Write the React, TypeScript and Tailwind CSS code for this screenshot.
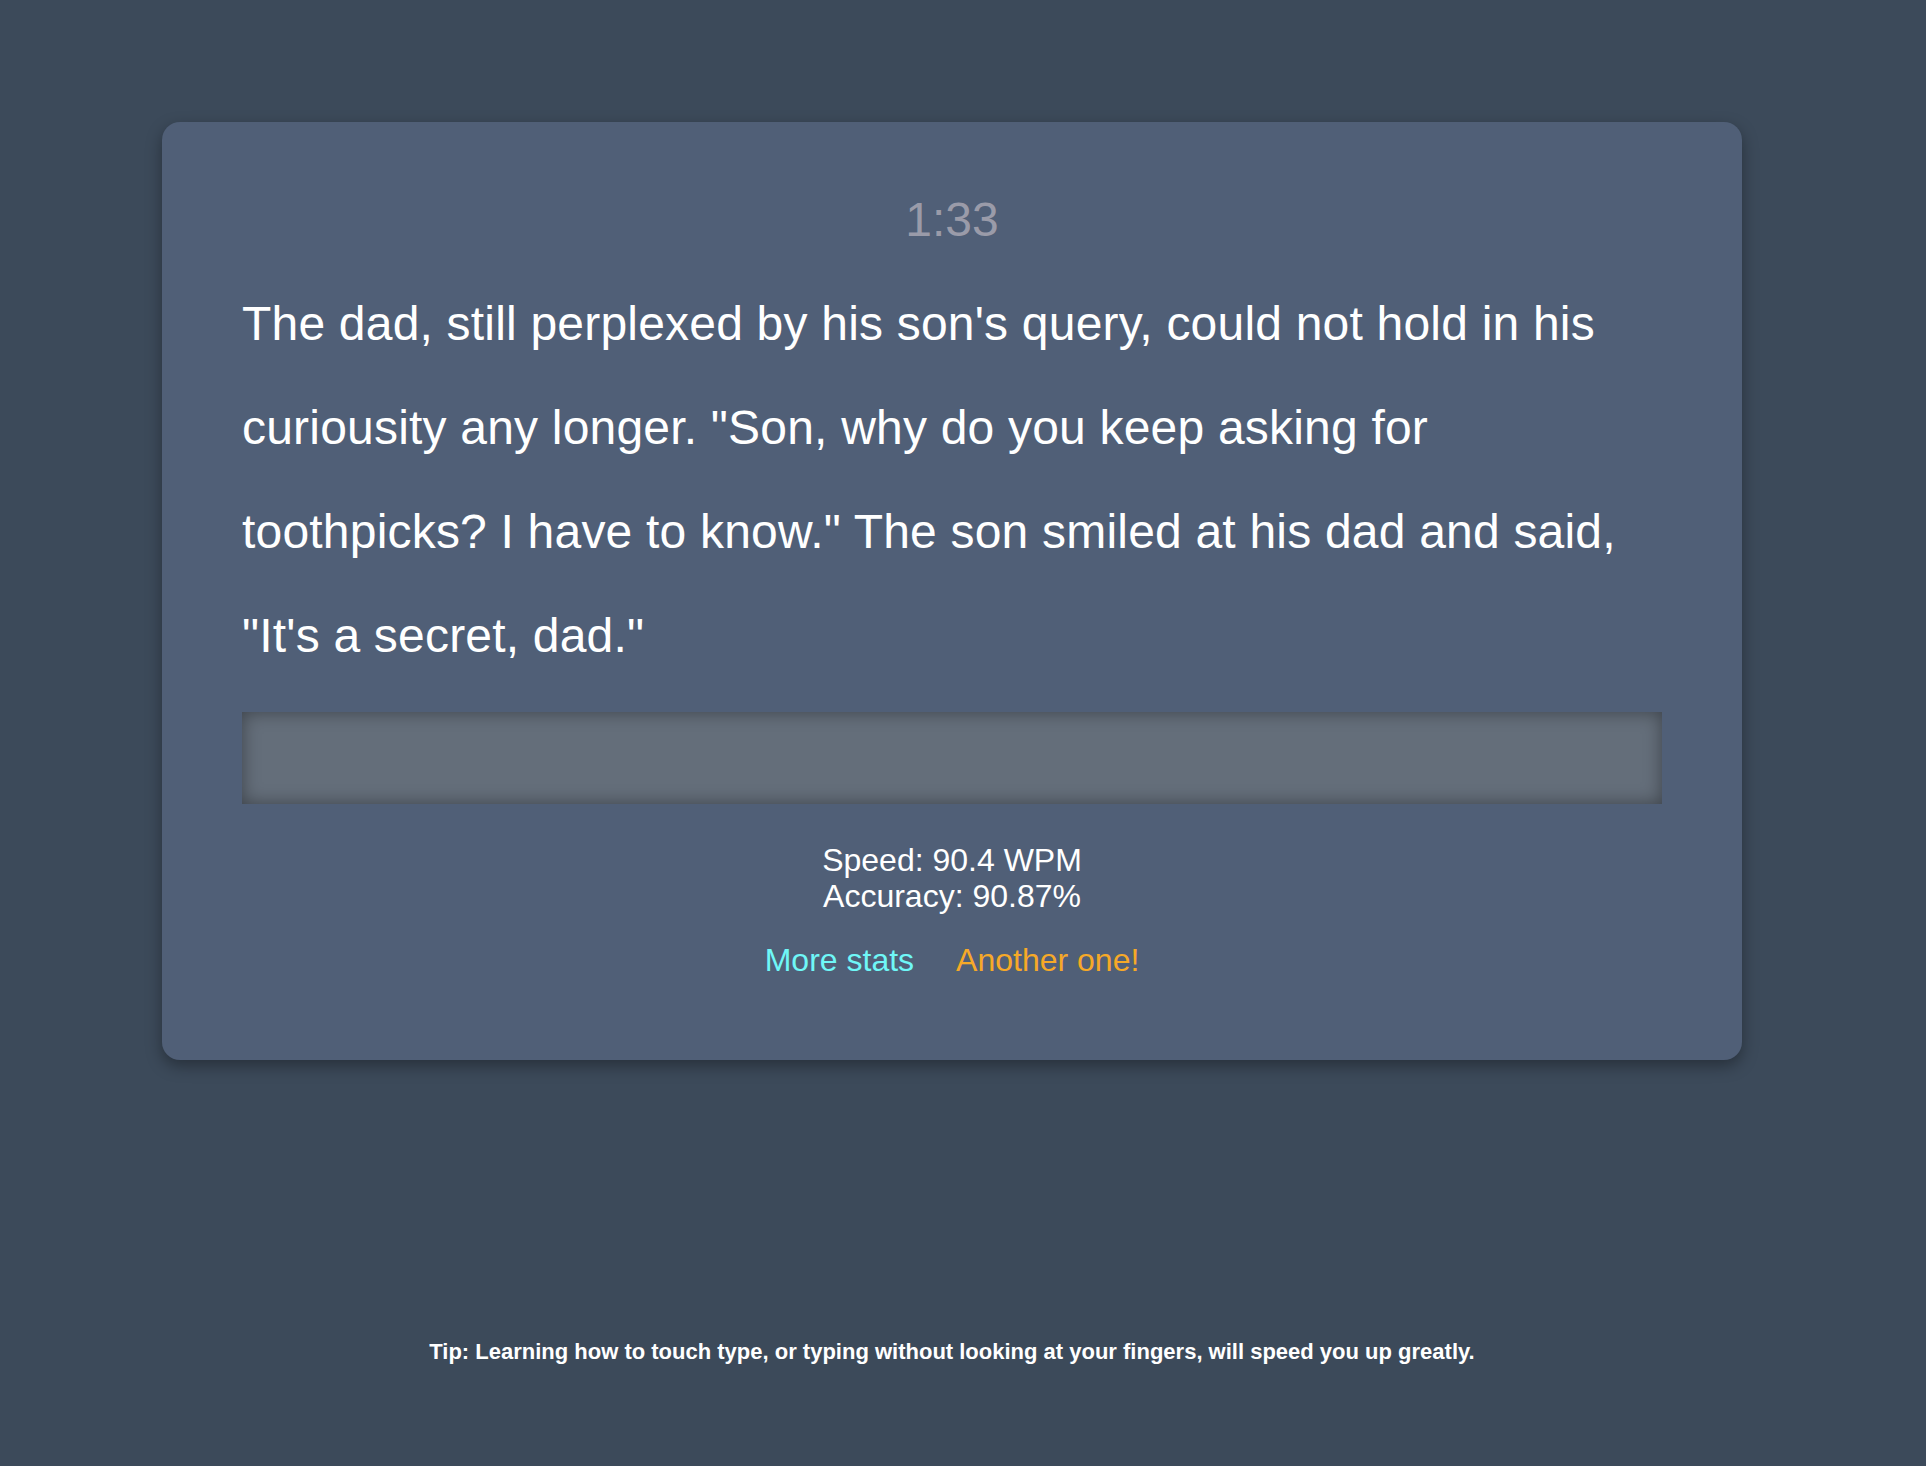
export default function App() {
  const font = { fontFamily: '"Liberation Sans", Arial, Helvetica, sans-serif' };
  return (
    <div className="min-h-[1466px] w-full bg-[#3c4a5a] text-white" style={font}>
      <div className="ml-[162px] w-[1580px] pt-[122px]">
        <div className="rounded-[18px] bg-[#505f77] px-[80px] pt-[70px] pb-[81px] shadow-[0_6px_16px_rgba(0,0,0,0.35)]">
          <div className="text-center text-[48px] leading-[55px] text-[#9a9ba9]">1:33</div>
          <p className="mt-[25px] text-[48px] leading-[104px] tracking-[0.2px] text-white">
            The dad, still perplexed by his son's query, could not hold in his curiousity any longer. "Son, why do you keep asking for toothpicks? I have to know." The son smiled at his dad and said, "It's a secret, dad."
          </p>
          <div className="mt-[24px] h-[92px] w-full bg-[#646e7a] shadow-[inset_0_0_18px_rgba(0,0,0,0.4)]"></div>
          <div className="mt-[38px] flex flex-col items-center text-[32px] leading-[36px]">
            <div>Speed: 90.4 WPM</div>
            <div>Accuracy: 90.87%</div>
          </div>
          <div className="mt-[28px] flex justify-center gap-[42px] text-[32px] leading-[37px]">
            <span className="text-[#6ff7f7]">More stats</span>
            <span className="text-[#f6a928]">Another one!</span>
          </div>
        </div>
        <div className="mt-[279px] text-center text-[22px] leading-[25px] font-bold text-white">
          Tip: Learning how to touch type, or typing without looking at your fingers, will speed you up greatly.
        </div>
      </div>
    </div>
  );
}
